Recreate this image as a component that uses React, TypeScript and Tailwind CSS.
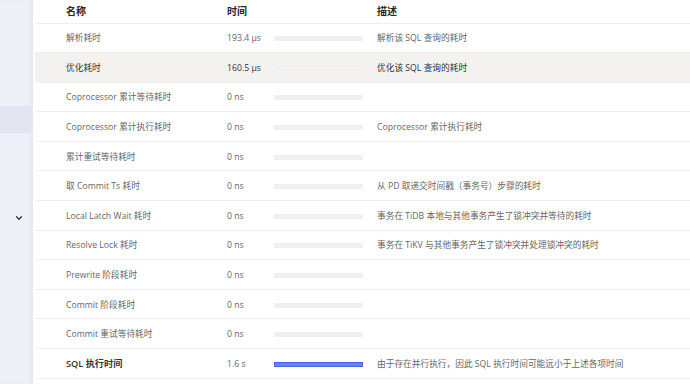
import { ChevronDown } from "lucide-react";

type Row = {
  name: string;
  time: string;
  desc?: string;
  pct?: number;
  active?: boolean;
  strong?: boolean;
};

const rows: Row[] = [
  { name: "解析耗时", time: "193.4 μs", desc: "解析该 SQL 查询的耗时" },
  { name: "优化耗时", time: "160.5 μs", desc: "优化该 SQL 查询的耗时", active: true },
  { name: "Coprocessor 累计等待耗时", time: "0 ns" },
  { name: "Coprocessor 累计执行耗时", time: "0 ns", desc: "Coprocessor 累计执行耗时" },
  { name: "累计重试等待耗时", time: "0 ns" },
  { name: "取 Commit Ts 耗时", time: "0 ns", desc: "从 PD 取递交时间戳（事务号）步骤的耗时" },
  { name: "Local Latch Wait 耗时", time: "0 ns", desc: "事务在 TiDB 本地与其他事务产生了锁冲突并等待的耗时" },
  { name: "Resolve Lock 耗时", time: "0 ns", desc: "事务在 TiKV 与其他事务产生了锁冲突并处理锁冲突的耗时" },
  { name: "Prewrite 阶段耗时", time: "0 ns" },
  { name: "Commit 阶段耗时", time: "0 ns" },
  { name: "Commit 重试等待耗时", time: "0 ns" },
  {
    name: "SQL 执行时间",
    time: "1.6 s",
    desc: "由于存在并行执行，因此 SQL 执行时间可能远小于上述各项时间",
    pct: 100,
    strong: true,
  },
];

export default function App() {
  return (
    <div
      className="flex w-[690px] h-[384px] overflow-hidden bg-white"
      style={{ fontFamily: '"Open Sans", "Noto Sans CJK SC", sans-serif' }}
    >
      {/* side nav */}
      <div className="w-[33px] shrink-0 bg-[#eef0f8] shadow-[inset_-5px_0_5px_-3px_rgba(0,0,0,0.05)] flex flex-col">
        <div className="h-[106px]" />
        <div className="h-[27px] bg-[#e2e4ef]" />
        <div className="h-[80px]" />
        <div className="flex justify-center pl-[4px]">
          <ChevronDown size={10} strokeWidth={3} className="text-[#333]" />
        </div>
      </div>

      {/* table */}
      <div className="flex-1 pl-[2px]">
        <div className="flex items-center h-[23.5px] border-b border-[#f0f0f0] text-[10px] font-bold text-[#262626]">
          <div className="w-[192px] pl-[31px]">名称</div>
          <div className="w-[150px]">时间</div>
          <div>描述</div>
        </div>
        {rows.map((r) => (
          <div
            key={r.name}
            className={
              "flex items-center h-[29.6px] pt-[2px] border-b border-[#f0f0f0] text-[8.7px] " +
              (r.active ? "bg-[#f3f2f1] text-[#333]" : "text-[#666]")
            }
          >
            <div
              className={
                "w-[192px] pl-[31px] whitespace-nowrap " +
                (r.strong ? "text-[9.2px] font-semibold text-[#333]" : "")
              }
            >
              {r.name}
            </div>
            <div className="w-[47px] whitespace-nowrap">{r.time}</div>
            <div className="w-[89px] h-[5px] bg-[#f0f0f0]">
              {r.pct ? (
                <div
                  className="h-full bg-[#6a7ff2] border border-[#4c63e0]"
                  style={{ width: `${r.pct}%` }}
                />
              ) : null}
            </div>
            <div className="ml-[14px] whitespace-nowrap">{r.desc}</div>
          </div>
        ))}
      </div>
    </div>
  );
}
